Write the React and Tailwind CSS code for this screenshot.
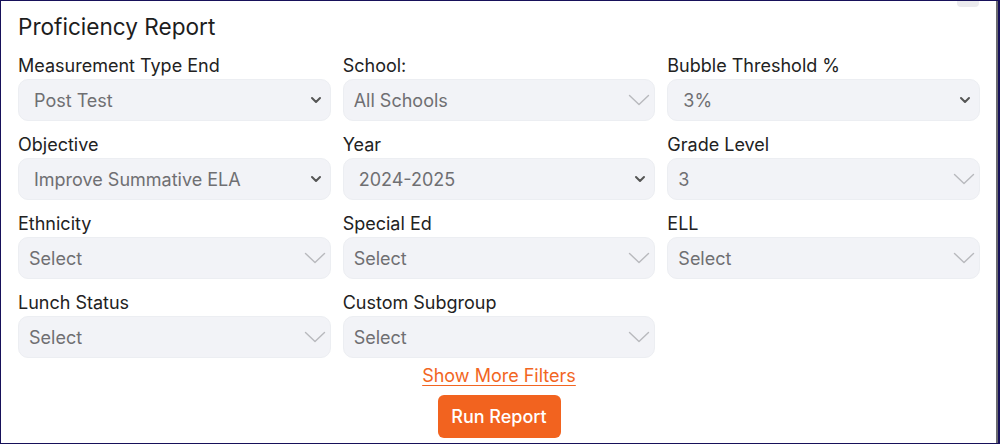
import React from "react";

const font = { fontFamily: "Inter, Roboto, 'Noto Sans', sans-serif" };

function SmallChevron() {
  return (
    <svg width="12" height="8" viewBox="0 0 12 8" className="shrink-0">
      <path d="M2 2l4 4 4-4" fill="none" stroke="#555" strokeWidth="2" strokeLinecap="round" strokeLinejoin="round" />
    </svg>
  );
}

function ThinChevron() {
  return (
    <svg width="22" height="12" viewBox="0 0 22 12" className="shrink-0">
      <path d="M1.5 1.5l9.5 9 9.5-9" fill="none" stroke="#b8b9bd" strokeWidth="1.4" strokeLinecap="round" strokeLinejoin="round" />
    </svg>
  );
}

function Field({ label, value, native }) {
  return (
    <div className="flex flex-col">
      <div className="text-[18px] leading-[26px] text-[#222]">{label}</div>
      <div
        className={
          "flex h-[42px] items-center justify-between rounded-[10px] border border-[#eceef2] bg-[#f2f3f7] " +
          (native ? "pl-[15px] pr-[8px]" : "pl-[10px] pr-[4px]")
        }
      >
        <span className="text-[18px] text-[#6f6f72]">{value}</span>
        {native ? <SmallChevron /> : <ThinChevron />}
      </div>
    </div>
  );
}

export default function App() {
  return (
    <div style={font} className="relative flex h-[444px] w-[1000px] overflow-hidden border-y border-l border-r-2 border-[#17115a] bg-white">
      <div className="absolute right-[19px] top-0 h-[6px] w-[22px] rounded-b-[4px] bg-[#ebebee]" />
      <div className="flex flex-1 flex-col pl-[17px] pr-[16px]">
        <h1 className="mt-[12px] text-[22.6px] leading-[28px] text-[#1d1d1d]">Proficiency Report</h1>
        <div className="mt-[12px] grid grid-cols-3 gap-x-[12px] gap-y-[11px]">
          <Field label="Measurement Type End" value="Post Test" native />
          <Field label="School:" value="All Schools" />
          <Field label="Bubble Threshold %" value="3%" native />
          <Field label="Objective" value="Improve Summative ELA" native />
          <Field label="Year" value="2024-2025" native />
          <Field label="Grade Level" value="3" />
          <Field label="Ethnicity" value="Select" />
          <Field label="Special Ed" value="Select" />
          <Field label="ELL" value="Select" />
          <Field label="Lunch Status" value="Select" />
          <Field label="Custom Subgroup" value="Select" />
        </div>
        <div className="mt-[6px] flex flex-col items-center">
          <a className="text-[18px] leading-[24px] text-[#f26522] underline underline-offset-[3px]">Show More Filters</a>
          <button className="mt-[7px] h-[43px] w-[123px] rounded-[6px] bg-[#f2631f] text-[18px] font-medium text-white">
            Run Report
          </button>
        </div>
      </div>
      <div className="w-[2px] bg-[#6b6b70]" />
    </div>
  );
}
